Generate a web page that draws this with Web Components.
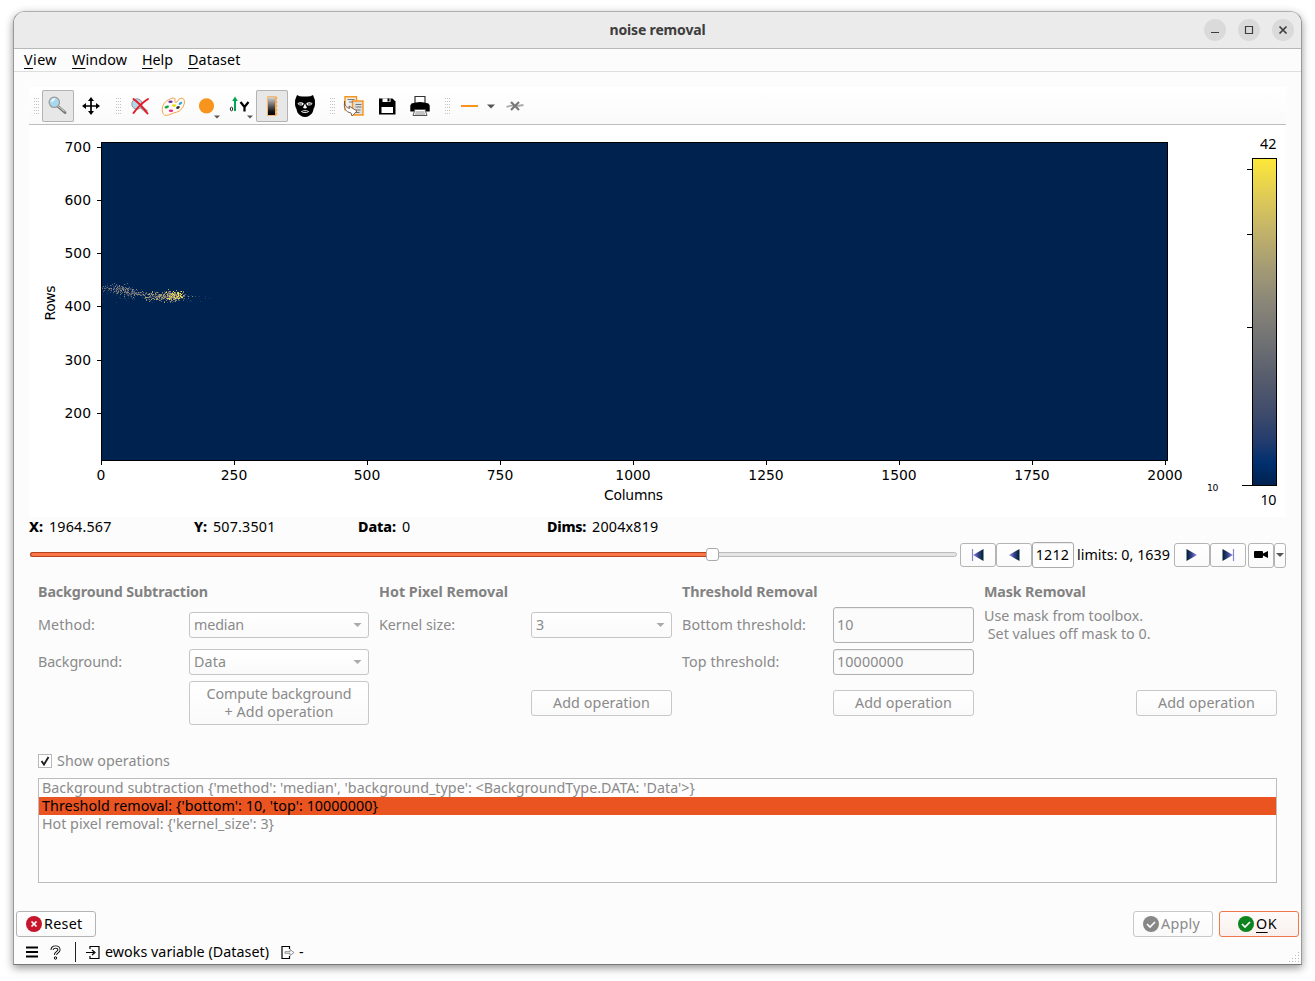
<!DOCTYPE html>
<html lang="en">
<head>
<meta charset="utf-8">
<title>noise removal</title>
<style>
  body {
    margin: 0;
    height: 981px;
    overflow: hidden;
    background: #fff;
    color: #000;
    font: 14.3px/18px "Noto Sans", "Open Sans", sans-serif;
  }
</style>
</head>
<body>
<noise-window></noise-window>

<script>
const DISABLED = '#8a8a8a';

const ICONS = {
  zoom: `<path d="M15 15.500l8 7" stroke="#777" stroke-width="2.800" stroke-linecap="round"/><path d="M15.500 15.500l7 6" stroke="#ddd" stroke-width="1"/><circle cx="12.300" cy="12.300" r="5.200" fill="#a9d8ee" stroke="#999" stroke-width="1.200"/><path d="M8.500 12q1-4 5-4-1 4-5 4" fill="#e8f8ff"/>`,
  pan: `<path d="M16 9v14M9 16h14" stroke="#000" stroke-width="1.700"/><path d="M16 7l3 4h-6zM16 25l3-4h-6zM7 16l4-3v6zM25 16l-4-3v6z"/>`,
  reset: `<path d="M16 16l7 6" stroke="#999" stroke-width="3"/><circle cx="13" cy="14" r="5.200" fill="#b5d8e8" stroke="#999"/><path d="M9.500 9q7 5 14 14.500M24 9Q16 14 9.500 23" fill="none" stroke="#e51b28" stroke-width="2" stroke-linecap="round"/>`,
  palette: `<path d="M5.500 22C4 15 9 9.500 16 8q3-.5 2 3-.5 2.500 2 1 1.500-4 5-4 3 .5 2.500 5-1 5-5 8-3 1.500-6 2-2.500 1-5 2-5 1.500-6-3z" fill="#fffaf3" stroke="#f6a552" stroke-width="1"/><ellipse cx="13.500" cy="11.800" rx="2.200" ry="1.200" fill="#7035a3"/><ellipse cx="9.800" cy="17" rx="2.300" ry="1.200" fill="#12a24d" transform="rotate(-20 9.800 17)"/><ellipse cx="17" cy="15.500" rx="2" ry="1.200" fill="#dede00"/><ellipse cx="14" cy="20.800" rx="2.200" ry="1.200" fill="#e8288c"/><ellipse cx="21" cy="17.500" rx="1.900" ry="1.300" fill="#333" transform="rotate(-20 21 17.500)"/><ellipse cx="23.500" cy="13.300" rx="2.100" ry="1.200" fill="#27a9e1" transform="rotate(-35 23.500 13.300)"/>`,
  dot: `<circle cx="16.500" cy="15.800" r="7.600" fill="#f7941d"/><path d="M24 25.500h6l-3 3z" fill="#555"/>`,
  axis: `<ellipse cx="8.500" cy="19" rx="1.200" ry="1.800" fill="none" stroke="#222"/><path d="M12 21V10" stroke="#00a651" stroke-width="2"/><path d="M12 6.500l2.800 4.500H9.200z" fill="#00a651"/><path d="M17.500 12l4 5v4.500m0-4.500l4-5" fill="none" stroke="#000" stroke-width="2.200"/><path d="M24 25.500h6l-3 3z" fill="#555"/>`,
  colorbar: `<defs><linearGradient id="g" x2="0" y2="1"><stop stop-color="#ddd"/><stop offset=".8" stop-color="#111"/><stop offset="1"/></linearGradient></defs><rect x="11.500" y="6.500" width="8" height="19" rx=".5" fill="url(#g)" stroke="#f9b668"/><path d="M20 6.500v19M20 8h1.500M20 12h1.500M20 16h1.500M20 20h1.500M20 24h1.500" stroke="#f79a35" fill="none"/>`,
  mask: `<path d="M8 5q3 2 8 1.400Q21 7 24 5q2.500 4.500 2 9.500-.3 3-1.500 4.500-.5 4.500-4 6.500-4.500 3-9 0-3.500-2-4-6.500-1.200-1.500-1.500-4.500Q5.500 9.500 8 5z"/><path d="M8.500 13.200q3.500-2.200 6.300.2-.5 2.300-3.200 2.200-2.600-.2-3.100-2.400zM23.500 13.200q-3.500-2.200-6.300.2.500 2.300 3.200 2.200 2.600-.2 3.100-2.400zM16 13.500l2 4.300q-2 1.400-4 0zM11.800 21.500q4.200-2.600 8.400 0-4.200 3.200-8.400 0z" fill="#fff"/><path d="M9.500 14h3.500M19 14h3.500M13.500 21.600h5" stroke="#000" stroke-width=".9"/>`,
  copy: `<g stroke="#f7941d" stroke-width="1.400"><path d="M7 6.700h11.500v13H7z" fill="#eee"/><path d="M14.500 11H25v14H14.500z" fill="#ddd"/></g><path d="M9.500 9.500h7M11 12h4M17.500 14.500h6M17.500 17h6M17.500 20h5M17.500 22.500h4" stroke="#777"/><path d="M6.500 11q-.5 6 5 7.500l-.5-2.500 8 5-5 5-1-3Q5 22 6.500 11z" fill="#fff" stroke="#77533a" stroke-width=".9"/>`,
  save: `<path d="M8 8.500h13.500l3 3v13H8z"/><path d="M11.500 8.500h8v3.500h-8zM10.500 17h11.500v6H10.500z" fill="#fff"/><path d="M16.500 8.500h2v3h-2z"/>`,
  print: `<path d="M11 13V6.500h10V13" fill="#fff" stroke="#333" stroke-width="1.200"/><path d="M7.500 13.500q8.500-3 17 0l1.200 2v6H22l-1-2.500H11l-1 2.500H6.300v-6z"/><path d="M11 19.500h10l2 6H9z" fill="#fff" stroke="#555"/><path d="M11.500 22h9M11 24h10" stroke="#888"/>`,
  line: `<path d="M8 16h17" stroke="#f7941d" stroke-width="2"/>`,
  marker: `<path d="M7.500 17q4-2 8.500-1 4 0 8.500-1" stroke="#aaa" stroke-width="1.800" fill="none"/><path d="M12 12l8 8m0-8l-8 8" stroke="#777" stroke-width="2.200"/>`
};

// Groups of tool bar icons, each preceded by a grip. A star marks a pressed tool.
const TOOLS = [
  ['zoom*', 'pan'],
  ['reset', 'palette', 'dot', 'axis', 'colorbar*', 'mask'],
  ['copy', 'save', 'print'],
  ['line', 'drop', 'marker']
];

class FitText extends HTMLElement {
  constructor() {
    super();
    this.attachShadow({ mode: 'open' }).innerHTML = `
      <style>
        :host { display: inline-block; flex: none; }
        span { white-space: pre; }
      </style><span><slot></slot></span>`;
  }

  connectedCallback() {
    const width = Number(this.getAttribute('width'));
    const span = this.shadowRoot.querySelector('span');
    const natural = span.getBoundingClientRect().width;
    const count = this.textContent.length;
    if (!width || !natural) return;
    span.style.letterSpacing = `${(width - natural) / count}px`;
    this.style.width = `${width}px`;
  }
}

class TitleBar extends HTMLElement {
  constructor() {
    super();
    this.attachShadow({ mode: 'open' }).innerHTML = `
      <style>
        :host {
          display: grid; grid-template-columns: 1fr auto 1fr; align-items: center;
          height: 36px; background: #ebebeb; border-bottom: 1px solid #b9b9b9;
          border-radius: 11px 11px 0 0; color: #3d3d3d; font-weight: 700; font-size: 14px;
        }
        div { grid-column: 3; display: flex; gap: 12px; justify-content: flex-end; padding-right: 7px; }
        svg { width: 22px; height: 22px; background: #dadada; border-radius: 50%; }
        path { fill: none; stroke: #3d3d3d; }
        .t { grid-column: 2; }
      </style>
      <span class="t"><slot></slot></span>
      <div>
        <svg><path d="M7 13.500h8"/></svg>
        <svg><path d="M7.500 7.500h7v7h-7z" stroke-width="1.200"/></svg>
        <svg><path d="M7.500 7.500l7 7m0-7l-7 7" stroke-width="1.700"/></svg>
      </div>`;
  }
}

class MenuBar extends HTMLElement {
  constructor() {
    super();
    this.attachShadow({ mode: 'open' }).innerHTML = `
      <style>
        :host { display: flex; gap: 15px; height: 22px; padding-left: 10px; line-height: 22px; border-bottom: 1px solid #dedede; }
      </style><slot></slot>`;
  }
}

class ToolBar extends HTMLElement {
  constructor() {
    super();
    const groups = TOOLS.map(group => '<i></i>' + group.map(name => {
      if (name === 'drop') return '<svg class="drop" viewBox="0 0 12 32"><path d="M2 14.500h8l-4 4z" fill="#555"/></svg>';
      const key = name.replace('*', '');
      return `<svg class="${name === key ? '' : 'on'}" viewBox="0 0 32 32">${ICONS[key]}</svg>`;
    }).join('')).join('');
    this.attachShadow({ mode: 'open' }).innerHTML = `
      <style>
        :host {
          display: flex; align-items: center; gap: 1px; height: 37px;
          background: linear-gradient(#fff, #fafafa); border-bottom: 1px solid #bdbdbd;
        }
        svg { width: 32px; height: 32px; flex: none; margin-top: 1px; }
        .on { background: #e7e7e7; box-shadow: inset 0 0 0 1px #b3b3b3; border-radius: 2px; }
        .drop { width: 12px; margin-left: -1px; margin-right: 1px; }
        i { width: 5px; height: 16px; margin: 0 2px 0 8px; background: conic-gradient(from 0deg at 1px 1px, transparent 75%, #c4c4c4 0) 0 0 / 2px 3px; }
        i:first-of-type { margin-left: 5px; }
      </style>${groups}`;
  }
}

class DetectorPlot extends HTMLElement {
  constructor() {
    super();
    const xTicks = [0, 250, 500, 750, 1000, 1250, 1500, 1750, 2000].map((v, i) => {
      const x = Math.round(101 + i * 133);
      return `<path d="M${x + .5} 461v4"/><text x="${x}" y="480" text-anchor="middle">${v}</text>`;
    }).join('');
    const yTicks = [700, 600, 500, 400, 300, 200].map((v, i) => {
      const y = Math.round(146.500 + i * 53.300);
      return `<path d="M97 ${y + .5}h4"/><text x="91" y="${y + 5}" text-anchor="end">${v}</text>`;
    }).join('');
    this.attachShadow({ mode: 'open' }).innerHTML = `
      <style>
        :host { display: block; height: 392px; background: #fff; }
        svg { display: block; font: 13.9px "DejaVu Sans", sans-serif; }
        path { stroke: #000; }
        .ui { font: 14.3px "Noto Sans", sans-serif; }
      </style>
      <svg width="1257" height="392" viewBox="29 125 1257 392">
        <defs><linearGradient id="cividis" x1="0" y1="1" x2="0" y2="0">
          <stop stop-color="#00224e"/><stop offset=".07" stop-color="#00306f"/>
          <stop offset=".13" stop-color="#213b6e"/><stop offset=".22" stop-color="#3e4b6b"/>
          <stop offset=".33" stop-color="#575d6d"/><stop offset=".44" stop-color="#707173"/>
          <stop offset=".56" stop-color="#8a8678"/><stop offset=".67" stop-color="#a59c74"/>
          <stop offset=".78" stop-color="#c3b369"/><stop offset=".89" stop-color="#e1cc55"/>
          <stop offset="1" stop-color="#fee838"/>
        </linearGradient></defs>
        <rect x="101.500" y="142.500" width="1066" height="318" fill="#00224e" stroke="#000"/>
        <g shape-rendering="crispEdges">${this.#speckles()}</g>
        ${xTicks}${yTicks}
        <text x="633.500" y="500" text-anchor="middle" textLength="59">Columns</text>
        <text transform="translate(55 303) rotate(-90)" text-anchor="middle" textLength="35">Rows</text>
        <rect x="1252.500" y="158.500" width="24" height="327" fill="url(#cividis)" stroke="#000"/>
        <path d="M1247 169.500h5M1247 234.500h5M1247 327.500h5M1242 485.500h10"/>
        <text class="ui" x="1260" y="149" textLength="16.500">42</text>
        <text class="ui" x="1260.500" y="505" textLength="16">10</text>
        <text x="1207" y="491" style="font-size:9.300px" textLength="11.500">10</text>
      </svg>`;
  }

  // Scattered counts: [x, y, spread x, spread y, samples, coolest and hottest colour index]
  #speckles() {
    const colors = ['#1c3864', '#3e4b6b', '#646a70', '#8a8678', '#b0a36c', '#e1cc55', '#fee838'];
    const clusters = [
      [105, 287.500, 4, 1.500, 24, 0, 3], [119, 288.500, 5.500, 2, 200, 0, 4], [134, 293, 6, 2, 140, 0, 4],
      [155, 296, 5, 2.200, 160, 0, 5], [169, 296, 5.500, 2.500, 240, 1, 5], [176, 295.500, 3.500, 2, 190, 3, 7],
      [182, 296, 5, 2.200, 40, 0, 4], [150, 300, 26, 1.500, 26, 0, 1], [121, 296, 9, 1.500, 18, 0, 1],
      [204, 297, 2.500, .8, 4, 0, 1]
    ];
    let seed = 7;
    const random = () => (seed = (seed * 16807) % 2147483647) / 2147483647;
    const spread = () => (random() + random() + random() + random() - 2) * 1.700;
    let out = '';
    for (const [cx, cy, sx, sy, n, cool, hot] of clusters) {
      for (let i = 0; i < n; i++) {
        const x = Math.max(102, Math.round(cx + spread() * sx));
        const y = Math.round(cy + spread() * sy);
        const c = cool + Math.floor(random() * (hot - cool));
        out += `<rect x="${x}" y="${y}" width="1" height="1" fill="${colors[c]}"/>`;
      }
    }
    return out;
  }
}

class InfoRow extends HTMLElement {
  constructor() {
    super();
    this.attachShadow({ mode: 'open' }).innerHTML = `
      <style>
        :host { display: grid; grid-template-columns: 165px 164px 189px 1fr; height: 20px; line-height: 20px; }
        span { display: flex; gap: 6px; }
        b { font-weight: 800; }
      </style>
      <span><b><fit-text width="14">X:</fit-text></b><fit-text width="62.500">1964.567</fit-text></span>
      <span><b><fit-text width="13">Y:</fit-text></b><fit-text width="62.500">507.3501</fit-text></span>
      <span><b><fit-text width="38">Data:</fit-text></b><fit-text width="9">0</fit-text></span>
      <span><b><fit-text width="39">Dims:</fit-text></b><fit-text width="66.500">2004x819</fit-text></span>`;
  }
}

class FrameSlider extends HTMLElement {
  constructor() {
    super();
    const arrow = (d, bar = '') => `<button><svg width="14" height="14" viewBox="0 0 14 14">
      <path d="${d < 0 ? 'M12.500 1v12L2 7z' : 'M1.500 1v12L12 7z'}" fill="url(#${d < 0 ? 'back' : 'forward'})"/>${bar}</svg></button>`;
    const stops = '<stop offset=".1" stop-color="#04263c"/><stop offset=".5" stop-color="#38418c"/><stop offset="1" stop-color="#9292e8"/>';
    this.attachShadow({ mode: 'open' }).innerHTML = `
      <style>
        :host { display: flex; align-items: center; height: 26px; padding-top: 5px; }
        .defs { width: 0; height: 0; position: absolute; }
        .track { width: 927px; height: 5px; margin: -1px 3px 0 1px; flex: none; box-sizing: border-box; border: 1px solid #bbb; border-radius: 3px; background: #e4e4e4; display: flex; align-items: center; }
        .fill { width: 676px; height: 3px; margin-left: -1px; flex: none; background: #fb7549; border: 1px solid #b3441f; border-right: 0; border-radius: 3px 0 0 3px; }
        .thumb { width: 11px; height: 11px; flex: none; margin-left: -1px; border: 1px solid #aaa; border-radius: 3px; background: #fff; }
        button, .edit { box-sizing: border-box; flex: none; height: 24px; border: 1px solid #b4b4b4; border-radius: 3px; background: linear-gradient(#fff, #fafafa); padding: 0; width: 36px; display: grid; place-items: center; }
        .edit { width: 42px; height: 26px; background: #fff; border-color: #aaa; margin-right: 3px; box-shadow: inset 0 1px #eee; }
        .cam { width: 26px; height: 25px; margin-left: 2px; }
        .more { width: 12px; height: 25px; }
        fit-text { margin-right: 4px; }
        .edit fit-text { margin: 0 1px 0 0; }
      </style>
      <svg class="defs"><linearGradient id="back" x1="1" x2="0">${stops}</linearGradient><linearGradient id="forward">${stops}</linearGradient></svg>
      <div class="track"><div class="fill"></div><div class="thumb"></div></div>
      ${arrow(-1, '<path d="M1.500 1v12" stroke="#8888cc" stroke-width="1.200"/>')}
      ${arrow(-1)}
      <div class="edit"><fit-text width="33.500">1212</fit-text></div>
      <fit-text width="93">limits: 0, 1639</fit-text>
      ${arrow(1)}
      ${arrow(1, '<path d="M12.500 1v12" stroke="#8888cc" stroke-width="1.200"/>')}
      <button class="cam"><svg width="16" height="10"><rect x="1" y="1" width="9" height="7" rx="1"/><path d="M9 4l6-3v7l-6-3z"/></svg></button>
      <button class="more"><svg width="8" height="6"><path d="M0 1h8l-4 4z" fill="#555"/></svg></button>`;
  }
}

class UiCombo extends HTMLElement {
  constructor() {
    super();
    this.attachShadow({ mode: 'open' }).innerHTML = `
      <style>
        :host { box-sizing: border-box; display: flex; align-items: center; justify-content: space-between; height: 26px; padding: 0 6px 0 4px; border: 1px solid #c6c6c6; border-radius: 3px; background: linear-gradient(#fff, #fafafa); }
      </style><slot></slot><svg width="9" height="5"><path d="M.5 0h8l-4 4z" fill="#aaa"/></svg>`;
  }
}

class UiEdit extends HTMLElement {
  constructor() {
    super();
    this.attachShadow({ mode: 'open' }).innerHTML = `
      <style>
        :host { box-sizing: border-box; display: flex; align-items: center; align-self: stretch; padding: 0 3px; border: 1px solid #b0b0b0; border-radius: 3px; background: #fbfbfb; box-shadow: inset 0 1px #eee; }
      </style><slot></slot>`;
  }
}

class UiButton extends HTMLElement {
  constructor() {
    super();
    this.attachShadow({ mode: 'open' }).innerHTML = `
      <style>
        :host { box-sizing: border-box; display: flex; flex-direction: column; align-items: center; justify-content: center; min-height: 26px; border: 1px solid #c8c8c8; border-radius: 3px; background: linear-gradient(#fff, #fafafa); }
        :host([dialog]) { flex-direction: row; width: 80px; gap: 2px; padding-right: 3px; }
        :host([icon="cancel"]) { border-color: #b4b4b4; justify-content: flex-start; padding-left: 9px; }
        :host([icon="ok"]) { border-color: #f0764c; background: linear-gradient(#fdfbfa, #f9f0ed); }
        svg { flex: none; }
      </style>${this.#icon()}<slot></slot>`;
  }

  #icon() {
    const icon = this.getAttribute('icon');
    if (!icon) return '';
    const fill = { cancel: '#c7162b', apply: '#878787', ok: '#0e8420' }[icon];
    const mark = icon === 'cancel' ? 'M5.500 5.500l5 5m0-5l-5 5' : 'M4 8l3 3 5-5';
    return `<svg width="16" height="16"><circle cx="8" cy="8" r="8" fill="${fill}"/><path d="${mark}" fill="none" stroke="#fff" stroke-width="1.700"/></svg>`;
  }
}

class OperationGroup extends HTMLElement {
  constructor() {
    super();
    this.attachShadow({ mode: 'open' }).innerHTML = `
      <style>
        :host { display: grid; grid-template-columns: auto var(--field, 141px); grid-template-rows: 18px 36px 26px 44px; justify-content: space-between; row-gap: 6px; align-items: center; color: ${DISABLED}; }
        slot[name=title] { display: block; grid-column: 1 / 3; font-weight: 700; color: #828282; }
        ::slotted([action]) { grid-column: 2; grid-row: 4; }
        ::slotted([note]) { grid-column: 1 / 3; }
      </style><slot name="title"></slot><slot></slot>`;
  }
}

class OperationList extends HTMLElement {
  constructor() {
    super();
    this.attachShadow({ mode: 'open' }).innerHTML = `
      <style>
        :host { display: block; box-sizing: border-box; height: 105px; margin-top: 8px; border: 1px solid #bdbdbd; background: #fdfdfd; color: ${DISABLED}; }
        div { height: 18px; line-height: 18px; padding-left: 3px; }
        .on { background: #e95420; color: #000; }
      </style>
      <div><fit-text width="653">Background subtraction {'method': 'median', 'background_type': &lt;BackgroundType.DATA: 'Data'>}</fit-text></div>
      <div class="on"><fit-text width="336">Threshold removal: {'bottom': 10, 'top': 10000000}</fit-text></div>
      <div><fit-text width="232">Hot pixel removal: {'kernel_size': 3}</fit-text></div>`;
  }
}

class StatusBar extends HTMLElement {
  constructor() {
    super();
    this.attachShadow({ mode: 'open' }).innerHTML = `
      <style>
        :host { display: flex; align-items: center; height: 27px; padding: 3px 0 0 12px; box-sizing: border-box; }
        svg { flex: none; fill: none; stroke: #000; }
        .help { margin: 0 14px 0 12px; }
        .sep { width: 1px; height: 20px; background: #222; margin-right: 10px; }
        .in { margin-right: 4px; }
        .out { margin: 0 4px 0 12px; }
        .grip { align-self: flex-end; margin-left: auto; stroke: none; fill: #bbb; }
      </style>
      <svg width="12" height="12"><path d="M0 1.500h12M0 6h12M0 10.500h12" stroke-width="1.800"/></svg>
      <svg class="help" width="11" height="15"><path d="M2 5Q2 2 5.500 2T9 5c0 2-3.500 2-3.500 5" stroke-width="3"/><path d="M2 5.500Q2 2 5.500 2T9 5c0 2-3.500 2-3.500 5" stroke="#fff" stroke-width="1.300"/><circle cx="5.500" cy="13" r="1.200" fill="#fff"/></svg>
      <span class="sep"></span>
      <svg class="in" width="15" height="15"><path d="M4 4V1.500h9v12H4V11M0 7.500h8M6 5l3 2.500L6 10" stroke-width="1.200"/></svg>
      <fit-text width="164">ewoks variable (Dataset)</fit-text>
      <svg class="out" width="14" height="15"><path d="M8.500 4V1.500H1v12h7.500V11" stroke-width="1.200"/><path d="M4 6.700h5V4.500l4 3-4 3V8.300H4z" stroke="#777" stroke-width=".8"/></svg>
      <fit-text width="5">-</fit-text>
      <svg class="grip" width="12" height="12">${[0, 1, 2, 3].map(r => [0, 1, 2, 3].filter(c => r + c > 2).map(c => `<rect x="${c * 3}" y="${r * 3}" width="1" height="1"/>`).join('')).join('')}</svg>`;
  }
}

class NoiseWindow extends HTMLElement {
  constructor() {
    super();
    this.attachShadow({ mode: 'open' }).innerHTML = `
      <style>
        :host { box-sizing: border-box; display: block; width: 1289px; height: 954px; margin: 11px 0 0 13px; border: 1px solid #999; border-top-color: #b0b0b0; border-bottom-color: #777; border-radius: 12px 12px 0 0; background: #fcfcfc; box-shadow: 0 3px 9px rgba(0,0,0,.42); }
        main { padding: 15px 15px 0; }
        u { text-underline-offset: 3px; text-decoration-thickness: 1px; }
        .groups { display: grid; grid-template-columns: 331px 293px 292px 293px; column-gap: 10px; margin: 15px 0 0 9px; }
        .list { margin: 27px 9px 0; color: ${DISABLED}; }
        label { display: flex; align-items: center; height: 18px; gap: 5px; }
        .check { width: 14px; height: 14px; box-sizing: border-box; border: 1px solid #b8b8b8; background: #fff; margin-top: -1px; }
        .check svg { display: block; }
        footer { display: flex; gap: 6px; padding: 0 2px; margin-top: 28px; }
        footer [icon=apply] { margin-left: auto; color: ${DISABLED}; }
        [note] fit-text { display: block; }
      </style>
      <title-bar><fit-text width="96">noise removal</fit-text></title-bar>
      <menu-bar>
        <fit-text width="33"><u>V</u>iew</fit-text>
        <fit-text width="55"><u>W</u>indow</fit-text>
        <fit-text width="31"><u>H</u>elp</fit-text>
        <fit-text width="52.500"><u>D</u>ataset</fit-text>
      </menu-bar>
      <main>
        <tool-bar></tool-bar>
        <detector-plot></detector-plot>
        <info-row></info-row>
        <frame-slider></frame-slider>
        <div class="groups">
          <operation-group style="--field: 180px">
            <fit-text slot="title" width="170">Background Subtraction</fit-text>
            <fit-text width="57">Method:</fit-text><ui-combo><fit-text width="50">median</fit-text></ui-combo>
            <fit-text width="84">Background:</fit-text><ui-combo><fit-text width="32">Data</fit-text></ui-combo>
            <ui-button action style="height: 44px"><fit-text width="145">Compute background</fit-text><fit-text width="109">+ Add operation</fit-text></ui-button>
          </operation-group>
          <operation-group>
            <fit-text slot="title" width="129">Hot Pixel Removal</fit-text>
            <fit-text width="76">Kernel size:</fit-text><ui-combo><fit-text width="8">3</fit-text></ui-combo>
            <ui-button action><fit-text width="97">Add operation</fit-text></ui-button>
          </operation-group>
          <operation-group>
            <fit-text slot="title" width="135.500">Threshold Removal</fit-text>
            <fit-text width="124">Bottom threshold:</fit-text><ui-edit><fit-text width="16.500">10</fit-text></ui-edit>
            <fit-text width="97.500">Top threshold:</fit-text><ui-edit><fit-text width="66.500">10000000</fit-text></ui-edit>
            <ui-button action><fit-text width="97">Add operation</fit-text></ui-button>
          </operation-group>
          <operation-group>
            <fit-text slot="title" width="101.500">Mask Removal</fit-text>
            <div note><fit-text width="159">Use mask from toolbox.</fit-text><fit-text width="166.500"> Set values off mask to 0.</fit-text></div>
            <ui-button action><fit-text width="97">Add operation</fit-text></ui-button>
          </operation-group>
        </div>
        <div class="list">
          <label><span class="check"><svg width="12" height="12"><path d="M2.500 6l2.500 3.500L9.500 2" fill="none" stroke="#222" stroke-width="1.900"/></svg></span><fit-text width="113">Show operations</fit-text></label>
          <operation-list></operation-list>
        </div>
      </main>
      <footer>
        <ui-button dialog icon="cancel"><fit-text width="38.500">Reset</fit-text></ui-button>
        <ui-button dialog icon="apply"><fit-text width="39">Apply</fit-text></ui-button>
        <ui-button dialog icon="ok"><fit-text width="21"><u>O</u>K</fit-text></ui-button>
      </footer>
      <status-bar></status-bar>`;
  }
}

customElements.define('noise-window', NoiseWindow);
customElements.define('title-bar', TitleBar);
customElements.define('menu-bar', MenuBar);
customElements.define('tool-bar', ToolBar);
customElements.define('detector-plot', DetectorPlot);
customElements.define('info-row', InfoRow);
customElements.define('frame-slider', FrameSlider);
customElements.define('ui-combo', UiCombo);
customElements.define('ui-edit', UiEdit);
customElements.define('ui-button', UiButton);
customElements.define('operation-group', OperationGroup);
customElements.define('operation-list', OperationList);
customElements.define('status-bar', StatusBar);
// Last, because it measures its text in the finished tree.
customElements.define('fit-text', FitText);
</script>
</body>
</html>
